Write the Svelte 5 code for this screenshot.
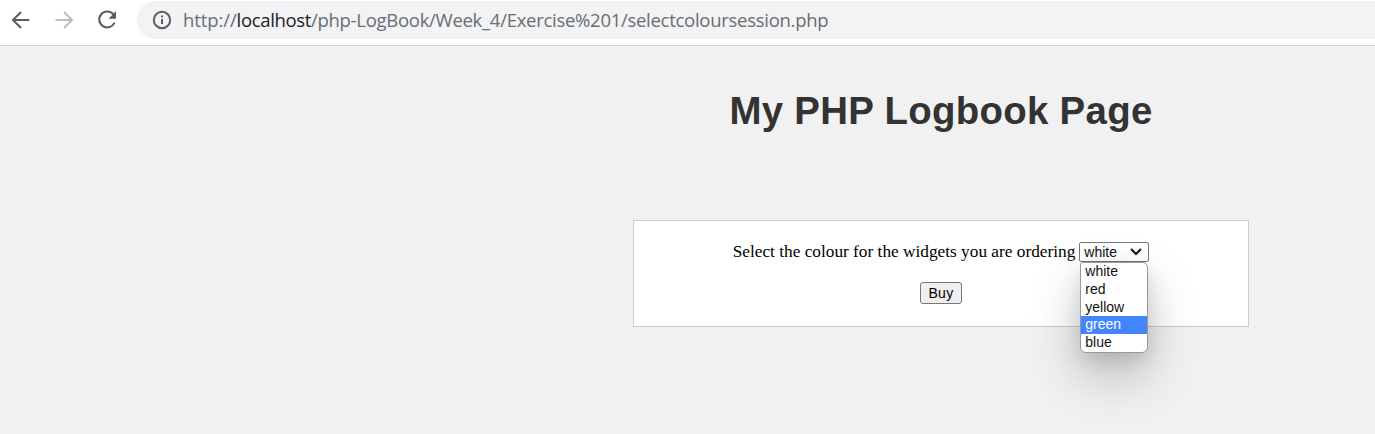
<script>
  const options = ['white', 'red', 'yellow', 'green', 'blue'];
  const highlighted = 'green';
</script>

<div class="window">
  <header class="toolbar">
    <nav class="nav">
      <svg width="24" height="24" viewBox="0 0 24 24" fill="none" stroke="#5a5d61" stroke-width="2"><path d="M20.4 12H4.2M12 4L4 12l8 8" /></svg>
      <svg width="24" height="24" viewBox="0 0 24 24" fill="none" stroke="#bbbcbe" stroke-width="2"><path d="M3.6 12h16.2M12 4l8 8-8 8" /></svg>
      <svg width="24" height="24" viewBox="0 0 24 24" fill="none" stroke="#5a5d61" stroke-width="2.1"><path d="M18.3 6.2A8 8 0 1 0 19.6 14.7" /><path d="M21 3.3v7.5h-7.5z" fill="#5a5d61" stroke="none" /></svg>
    </nav>
    <div class="address">
      <svg width="20" height="20" viewBox="0 0 20 20" fill="none" stroke="#5a5d61" stroke-width="2"><circle cx="10" cy="10" r="8.2" /><path d="M10 9v5M10 5.6v2" /></svg>
      <div class="url"><span class="scheme">http://</span><span class="host">localhost</span><span class="path">/php-LogBook/Week_4/Exercise%201/selectcoloursession.php</span></div>
    </div>
  </header>
  <main class="page">
    <h1>My PHP Logbook Page</h1>
    <form class="card">
      <div class="row">
        <span class="label">Select the colour for the widgets you are ordering</span>
        <div class="select">
          <span>white</span>
          <svg width="14" height="10" viewBox="0 0 14 10" fill="none" stroke="#111" stroke-width="2"><path d="M2 2l5 5 5-5" /></svg>
          <ul class="menu">
            {#each options as option}
              <li class:active={option === highlighted}>{option}</li>
            {/each}
          </ul>
        </div>
      </div>
      <button type="button">Buy</button>
    </form>
  </main>
</div>

<style>
  :global(body) { margin: 0; }
  .window { width: 1375px; height: 434px; overflow: hidden; background: #f1f1f1; display: flex; flex-direction: column; }
  .toolbar { box-sizing: border-box; height: 46px; flex: none; background: #fff; border-bottom: 1px solid #d3d4d6; display: flex; padding-top: 1px; }
  .nav { display: flex; gap: 19px; padding: 7px 0 0 9px; width: 128px; flex: none; box-sizing: content-box; }
  .nav svg { flex: none; }
  .address { flex: 1; height: 38px; background: #f1f3f4; border-radius: 19px 0 0 19px; display: flex; align-items: center; padding-left: 15px; }
  .url { margin-left: 11px; font: 18.5px/38px "Open Sans", sans-serif; color: #6a6d71; white-space: nowrap; display: flex; }
  .scheme { letter-spacing: -0.1px; }
  .host { color: #202124; letter-spacing: -0.35px; }
  .path { letter-spacing: -0.28px; }
  .page { width: 1882px; display: flex; flex-direction: column; align-items: center; }
  h1 { margin: 42px 0 0; font: bold 38.4px/46px "Liberation Sans", Arial, sans-serif; letter-spacing: 0.3px; color: #333; }
  .card { box-sizing: border-box; width: 616px; height: 107px; margin: 86px 0 0; padding-top: 20px; background: #fff; border: 1px solid #ccc; display: flex; flex-direction: column; align-items: center; }
  .row { display: flex; align-items: center; gap: 4px; height: 22px; }
  .label { font: 17.3px/20px "Liberation Serif", "Times New Roman", serif; color: #000; }
  .select { position: relative; box-sizing: border-box; width: 70px; height: 20px; padding: 0 5px 0 4px; border: 1px solid #767676; border-radius: 2px; background: #fff; display: flex; align-items: center; justify-content: space-between; font: 14px/18px "Liberation Sans", Arial, sans-serif; color: #111; }
  .menu { position: absolute; left: 0; top: 19px; box-sizing: border-box; width: 68px; height: 91px; margin: 0; padding: 0; list-style: none; background: #fff; border: 1px solid #999; border-radius: 3px 5px 6px 6px; overflow: hidden; box-shadow: 0 22px 50px rgba(0, 0, 0, 0.24), 0 8px 18px rgba(0, 0, 0, 0.1); }
  li { height: 18px; line-height: 18px; padding-left: 4px; }
  li:nth-child(n + 4) { line-height: 17px; }
  li:nth-child(1) { height: 17px; line-height: 17px; }
  .active { background: #4285ff; color: #fff; }
  button { box-sizing: border-box; width: 42px; height: 22px; margin-top: 19px; padding: 0; border: 1px solid #767676; border-radius: 3px; background: #efefef; color: #000; font: 14px/18px "Liberation Sans", Arial, sans-serif; letter-spacing: 0.3px; }
</style>
